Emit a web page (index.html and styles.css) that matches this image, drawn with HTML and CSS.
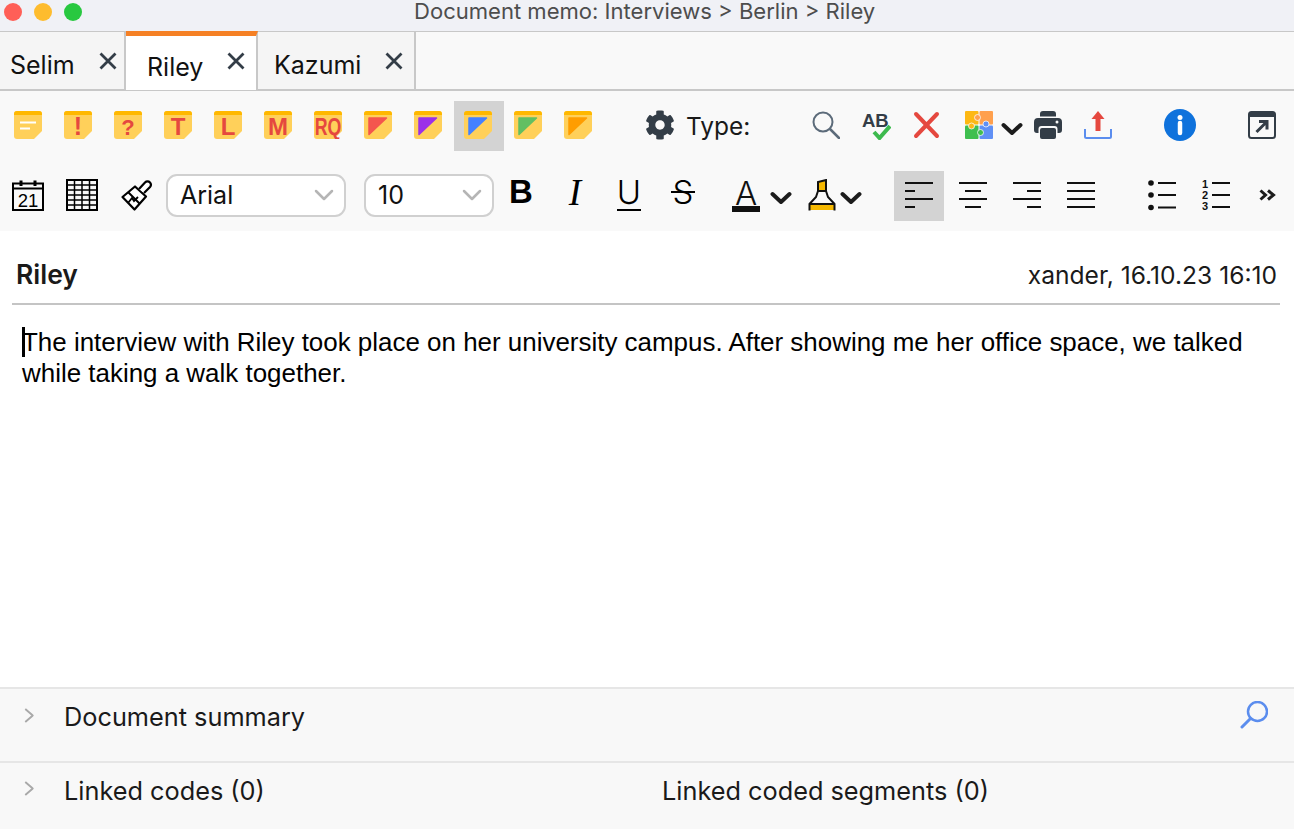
FILE: index.html
```html
<!DOCTYPE html>
<html lang="en">
<head>
<meta charset="utf-8">
<title>Document memo</title>
<link rel="stylesheet" href="styles.css">
</head>
<body>
<svg class="sprite" width="0" height="0">
  <symbol id="note" viewBox="0 0 28 28">
    <path fill="#ffd05a" d="M3 0H25a3 3 0 0 1 3 3V20L20 28H3a3 3 0 0 1-3-3V3a3 3 0 0 1 3-3z"/>
    <path fill="#ffb800" d="M3 0H25a3 3 0 0 1 3 3V4H0V3a3 3 0 0 1 3-3z"/>
  </symbol>
  <symbol id="chev" viewBox="0 0 22 14">
    <path fill="none" stroke="#1c1c1c" stroke-width="4" stroke-linecap="round" stroke-linejoin="round" d="M2.500 3 11 11 19.500 3"/>
  </symbol>
  <symbol id="selchev" viewBox="0 0 20 12">
    <path fill="none" stroke="#b5b5b5" stroke-width="2.500" stroke-linecap="round" stroke-linejoin="round" d="M2 2 10 10 18 2"/>
  </symbol>
  <symbol id="gt" viewBox="0 0 10 16">
    <path fill="none" stroke="#a9a9a9" stroke-width="2" d="M1 1 9 8 1 15"/>
  </symbol>
</svg>

<header class="titlebar">
  <div class="lights"><i class="light red"></i><i class="light amber"></i><i class="light green"></i></div>
  <div class="title">Document memo: Interviews &gt; Berlin &gt; Riley</div>
</header>

<nav class="tabs">
  <div class="tab tab-selim"><span>Selim</span><svg class="close" viewBox="0 0 18 18"><path d="M1.500 1.500 16.500 16.500M16.500 1.500 1.500 16.500"/></svg></div>
  <div class="tab tab-riley active"><span>Riley</span><svg class="close" viewBox="0 0 18 18"><path d="M1.500 1.500 16.500 16.500M16.500 1.500 1.500 16.500"/></svg></div>
  <div class="tab tab-kazumi"><span>Kazumi</span><svg class="close" viewBox="0 0 18 18"><path d="M1.500 1.500 16.500 16.500M16.500 1.500 1.500 16.500"/></svg></div>
</nav>

<section class="toolbar">
  <div class="row row-one">
    <div class="cell"><svg class="ic28 note" viewBox="0 0 28 28"><use href="#note"/><path fill="#fff" d="M6 10.500H22V12.500H6zM6 16.500H16V18.500H6z"/></svg></div>
    <div class="cell"><svg class="ic28 note" viewBox="0 0 28 28"><use href="#note"/><text class="nt nt-bang" x="14" y="24">!</text></svg></div>
    <div class="cell"><svg class="ic28 note" viewBox="0 0 28 28"><use href="#note"/><text class="nt nt-q" x="14" y="24">?</text></svg></div>
    <div class="cell"><svg class="ic28 note" viewBox="0 0 28 28"><use href="#note"/><text class="nt" x="14" y="24">T</text></svg></div>
    <div class="cell"><svg class="ic28 note" viewBox="0 0 28 28"><use href="#note"/><text class="nt" x="14" y="24">L</text></svg></div>
    <div class="cell"><svg class="ic28 note" viewBox="0 0 28 28"><use href="#note"/><text class="nt" x="14" y="24">M</text></svg></div>
    <div class="cell"><svg class="ic28 note" viewBox="0 0 28 28"><use href="#note"/><text class="nt" transform="translate(14 24) scale(.74 1)">RQ</text></svg></div>
    <div class="cell"><svg class="ic28 note" viewBox="0 0 28 28"><use href="#note"/><path class="tri tri-red" d="M5 7H22.500L5 23.500z"/></svg></div>
    <div class="cell"><svg class="ic28 note" viewBox="0 0 28 28"><use href="#note"/><path class="tri tri-purple" d="M5 7H22.500L5 23.500z"/></svg></div>
    <div class="cell selected"><svg class="ic28 note" viewBox="0 0 28 28"><use href="#note"/><path class="tri tri-blue" d="M5 7H22.500L5 23.500z"/></svg></div>
    <div class="cell"><svg class="ic28 note" viewBox="0 0 28 28"><use href="#note"/><path class="tri tri-green" d="M5 7H22.500L5 23.500z"/></svg></div>
    <div class="cell"><svg class="ic28 note" viewBox="0 0 28 28"><use href="#note"/><path class="tri tri-orange" d="M5 7H22.500L5 23.500z"/></svg></div>

    <div class="cell gear-cell"><svg class="gear" viewBox="0 0 512 512"><path fill="#333d47" d="M487.400 315.700l-42.600-24.600c4.300-23.200 4.300-47 0-70.200l42.600-24.600c4.900-2.800 7.100-8.600 5.500-14-11.100-35.600-30-67.800-54.700-94.600-3.800-4.100-10-5.100-14.800-2.300L380.800 110c-17.900-15.400-38.500-27.300-60.800-35.100V25.800c0-5.600-3.900-10.500-9.400-11.700-36.700-8.200-74.300-7.800-109.200 0-5.500 1.200-9.400 6.100-9.400 11.700V75c-22.200 7.900-42.800 19.800-60.800 35.100L88.700 85.500c-4.900-2.800-11-1.900-14.800 2.300-24.700 26.700-43.600 58.900-54.700 94.600-1.700 5.400.6 11.200 5.500 14L67.300 221c-4.300 23.200-4.300 47 0 70.200l-42.600 24.600c-4.900 2.800-7.100 8.600-5.500 14 11.100 35.600 30 67.800 54.700 94.600 3.800 4.100 10 5.100 14.800 2.300l42.600-24.600c17.900 15.400 38.500 27.300 60.800 35.100v49.200c0 5.600 3.900 10.500 9.400 11.700 36.700 8.200 74.300 7.800 109.200 0 5.500-1.200 9.400-6.100 9.400-11.700v-49.200c22.200-7.900 42.800-19.800 60.800-35.100l42.600 24.600c4.900 2.800 11 1.900 14.800-2.300 24.700-26.700 43.600-58.900 54.700-94.600 1.500-5.500-.7-11.300-5.600-14.100zM256 336c-44.100 0-80-35.900-80-80s35.900-80 80-80 80 35.900 80 80-35.900 80-80 80z"/></svg></div>
    <div class="type-label">Type:</div>

    <div class="cell"><svg class="ic28" viewBox="0 0 28 28"><circle cx="11" cy="11" r="9.500" fill="none" stroke="#5c6b7a" stroke-width="2"/><path d="M18 18 27 27" stroke="#5c6b7a" stroke-width="2.500" stroke-linecap="round"/></svg></div>
    <div class="cell"><svg class="ic30" viewBox="0 0 30 30"><text class="ab" x="1" y="17">AB</text><path d="M13 22 18.500 28 29 16" fill="none" stroke="#3dba4e" stroke-width="4"/></svg></div>
    <div class="cell"><svg class="ic28" viewBox="0 0 28 28"><path d="M4 3 25 25M25 3 4 25" stroke="#e5483f" stroke-width="4" stroke-linecap="round"/></svg></div>
    <div class="cell puzzle-cell"><svg class="ic28" viewBox="0 0 28 28">
      <rect width="13.500" height="13.500" rx="1" fill="#fdb813"/>
      <rect x="14.500" width="13.500" height="13.500" rx="1" fill="#ffa04d"/>
      <rect y="14.500" width="13.500" height="13.500" rx="1" fill="#3fbf4f"/>
      <rect x="14.500" y="14.500" width="13.500" height="13.500" rx="1" fill="#6090f5"/>
      <circle class="knob" cx="6.500" cy="15" r="3" fill="#fdb813"/>
      <circle class="knob" cx="12.500" cy="6.500" r="3" fill="#ffa04d"/>
      <circle class="knob" cx="21" cy="13" r="3" fill="#6090f5"/>
      <circle class="knob" cx="15.500" cy="21.500" r="3" fill="#3fbf4f"/>
    </svg><svg class="chev" viewBox="0 0 22 14"><use href="#chev"/></svg></div>
    <div class="cell"><svg class="ic28" viewBox="0 0 28 28"><path fill="#333d47" d="M6 5.500V3a3 3 0 0 1 3-3H19a3 3 0 0 1 3 3V5.500zM4 7H24a4 4 0 0 1 4 4V19a3 3 0 0 1-3 3H23.500V18a3 3 0 0 0-3-3H7.500a3 3 0 0 0-3 3V22H3a3 3 0 0 1-3-3V11a4 4 0 0 1 4-4z"/><path fill="#333d47" d="M8 17H20a2 2 0 0 1 2 2V26a2 2 0 0 1-2 2H8a2 2 0 0 1-2-2V19a2 2 0 0 1 2-2z"/><circle cx="23" cy="11" r="1.500" fill="#f9f9f9"/></svg></div>
    <div class="cell"><svg class="ic28" viewBox="0 0 28 28"><path d="M1 18V25.500a1.500 1.500 0 0 0 1.500 1.500H25.500a1.500 1.500 0 0 0 1.500-1.500V18" fill="none" stroke="#5b8dee" stroke-width="2"/><path fill="#e5483f" d="M14 0 20.500 8H16.500V20H11.500V8H7.500z"/></svg></div>
    <div class="cell info-cell"><svg class="ic32" viewBox="0 0 32 32"><circle cx="16" cy="16" r="16" fill="#0f72dc"/><circle cx="16" cy="8.500" r="2.500" fill="#fff"/><path d="M16 14V24" stroke="#fff" stroke-width="4.500" stroke-linecap="round"/></svg></div>
    <div class="cell popout-cell"><svg class="ic28" viewBox="0 0 28 28"><rect x="1" y="1" width="26" height="26" rx="2.500" fill="none" stroke="#333d47" stroke-width="2"/><path fill="#333d47" d="M1 3a2 2 0 0 1 2-2H25a2 2 0 0 1 2 2V6H1z"/><path d="M8.500 21 19 10.500M11 10.500H19V18.500" fill="none" stroke="#333d47" stroke-width="3"/></svg></div>
  </div>

  <div class="row row-two">
    <div class="cell"><svg class="ic32" viewBox="0 0 32 32"><path d="M1 4.500H31V31H1z" fill="none" stroke="#000" stroke-width="2"/><path d="M1 9.500H31" stroke="#000" stroke-width="2"/><path d="M9 1.500V7M23 1.500V7" stroke="#000" stroke-width="3"/><text class="cal" x="16" y="28">21</text></svg></div>
    <div class="cell table-cell"><svg class="ic32" viewBox="0 0 32 32"><path d="M1 1H31V31H1z" fill="none" stroke="#000" stroke-width="2"/><path d="M1 6H31M1 11H31M1 16H31M1 21H31M1 26H31M8.500 1V31M16 1V31M23.500 1V31" stroke="#000" stroke-width="1.500"/></svg></div>
    <div class="cell brush-cell"><svg class="ic32" viewBox="0 0 32 32"><path d="M14 7.500 1.500 18 13.500 30.500 25 17.500z" fill="#fff" stroke="#000" stroke-width="2.200" stroke-linejoin="round"/><path d="M7 13 19 25" stroke="#000" stroke-width="2"/><path d="M7 24 11 19 13 22 17 18" fill="none" stroke="#000" stroke-width="1.800"/><path d="M18 10 24 3.500a3.500 3.500 0 0 1 5 0 3.500 3.500 0 0 1 0 4.500L23 14" fill="#fff" stroke="#000" stroke-width="2.200"/></svg></div>
    <div class="select select-font"><span>Arial</span><svg class="selchev" viewBox="0 0 20 12"><use href="#selchev"/></svg></div>
    <div class="select select-size"><span>10</span><svg class="selchev" viewBox="0 0 20 12"><use href="#selchev"/></svg></div>
    <div class="fmt fmt-b">B</div>
    <div class="fmt fmt-i">I</div>
    <div class="fmt fmt-u">U</div>
    <div class="fmt fmt-s">S</div>
    <div class="color-btn">
      <div class="fmt-a">A</div>
      <svg class="chev" viewBox="0 0 22 14"><use href="#chev"/></svg>
    </div>
    <div class="hl-btn">
      <svg class="hl" viewBox="0 0 28 32"><path fill="#f5b800" d="M10 12V3L18 1V12z"/><path fill="#f5b800" d="M1.500 25H26.500V31H1.500z"/><path d="M10 12V3L18 1V12M10 12 8 18 1.500 25V31.500M18 12 20 18 26.500 25V31.500M1.500 25H26.500M10 12H18" fill="none" stroke="#111" stroke-width="2"/></svg>
      <svg class="chev" viewBox="0 0 22 14"><use href="#chev"/></svg>
    </div>
    <div class="cell align selected"><svg class="al" viewBox="0 0 28 26"><path d="M0 1H28M0 9H10M0 17H28M0 25H10"/></svg></div>
    <div class="cell align"><svg class="al" viewBox="0 0 28 26"><path d="M0 1H28M6 9H22M0 17H28M6 25H22"/></svg></div>
    <div class="cell align"><svg class="al" viewBox="0 0 28 26"><path d="M0 1H28M14 9H28M0 17H28M14 25H28"/></svg></div>
    <div class="cell align"><svg class="al" viewBox="0 0 28 26"><path d="M0 1H28M0 9H28M0 17H28M0 25H28"/></svg></div>
    <div class="cell list-cell"><svg class="lst" viewBox="0 0 28 32"><circle cx="3" cy="4" r="2.800"/><circle cx="3" cy="16" r="2.800"/><circle cx="3" cy="28.500" r="2.800"/><path d="M10 4H28M10 16H28M10 28.500H28"/></svg></div>
    <div class="cell num-cell"><svg class="lst" viewBox="0 0 28 32"><text class="num" x="0" y="9">1</text><text class="num" x="0" y="20">2</text><text class="num" x="0" y="31">3</text><path d="M10 4H28M10 16H28M10 28H28"/></svg></div>
    <div class="more"><svg class="more-ic" viewBox="0 0 17 12"><path d="M1.500 1.500 6.500 6 1.500 10.500M9 1.500 14.500 6 9 10.500" fill="none" stroke="#1c1c1c" stroke-width="3"/></svg></div>
  </div>
</section>

<main class="doc">
  <div class="doc-head">
    <strong class="doc-name">Riley</strong>
    <span class="doc-meta">xander, 16.10.23 16:10</span>
  </div>
  <div class="doc-body"><i class="caret"></i>The interview with Riley took place on her university campus. After showing me her office space, we talked while taking a walk together.</div>
</main>

<section class="panel panel-summary">
  <svg class="gt" viewBox="0 0 10 16"><use href="#gt"/></svg>
  <span class="panel-label">Document summary</span>
  <svg class="panel-search" viewBox="0 0 28 28"><circle cx="17.500" cy="10.500" r="9.500" fill="none" stroke="#5b8dee" stroke-width="2.500"/><path d="M10.500 17.500 2 26" stroke="#5b8dee" stroke-width="3" stroke-linecap="round"/></svg>
</section>
<section class="panel panel-links">
  <svg class="gt" viewBox="0 0 10 16"><use href="#gt"/></svg>
  <span class="panel-label panel-codes">Linked codes (0)</span>
  <span class="panel-label panel-segs">Linked coded segments (0)</span>
</section>
</body>
</html>
```
FILE: styles.css
```css
* { box-sizing: border-box; }
html, body { margin: 0; padding: 0; }
body {
  width: 1294px;
  height: 829px;
  overflow: hidden;
  display: flex;
  flex-direction: column;
  font-family: Inter, "Noto Sans", sans-serif;
  color: #111;
  background: #fff;
}
.sprite { position: absolute; }

.titlebar {
  height: 32px;
  flex: none;
  background: #f0f1f6;
  border-bottom: 1px solid #c8c8c8;
  display: flex;
  align-items: center;
}
.lights { display: flex; gap: 12px; margin-left: 4px; margin-top: -7px; }
.light { width: 18px; height: 18px; border-radius: 50%; display: block; }
.red { background: #ff5f57; }
.amber { background: #febc2e; }
.green { background: #28c840; }
.title {
  margin-left: 332px;
  font-size: 22.050px;
  color: #4d4d4d;
  margin-top: -10px;
  white-space: nowrap;
}

.tabs {
  height: 59px;
  flex: none;
  display: flex;
  background: #f9f9f9;
  border-bottom: 2px solid #c8c8c8;
  font-size: 25px;
}
.tab {
  position: relative;
  height: 57px;
  display: flex;
  background: #f5f5f5;
  border-right: 2px solid #c8c8c8;
  padding-top: 15px;
  line-height: 36px;
}
.tab-selim { width: 126px; padding-left: 10px; }
.tab-riley { width: 132px; padding-left: 21px; }
.tab-kazumi { width: 158px; padding-left: 16px; }
.tab.active {
  background: #fff;
  height: 59px;
  margin-top: -1px;
  border-top: 5px solid #f58025;
  padding-top: 13px;
  margin-bottom: -2px;
}
.close {
  position: absolute;
  top: 20px;
  right: 7px;
  width: 18px;
  height: 18px;
  stroke: #333d47;
  stroke-width: 2.800;
  fill: none;
}
.tab.active .close { top: 16px; right: 11px; }
.tab-kazumi .close { right: 11px; }

.toolbar {
  height: 140px;
  flex: none;
  background: #f9f9f9;
  padding-top: 10px;
}
.row { display: flex; align-items: center; height: 50px; }
.row-one { padding-left: 4px; }
.row-two { margin-top: 20px; padding-left: 3px; }
.cell {
  width: 50px;
  height: 50px;
  flex: none;
  display: flex;
  align-items: center;
  justify-content: center;
}
.cell svg { margin-bottom: 2px; }
.cell svg.chev { margin-bottom: 0; margin-top: 5px; }
.selected { background: #d3d3d3; }
.ic28 { width: 28px; height: 28px; flex: none; }
.ic30 { width: 30px; height: 30px; flex: none; }
.ic32 { width: 32px; height: 32px; flex: none; }
.note { margin-right: 2px; }
.nt { font: bold 24px "Liberation Sans", sans-serif; fill: #e5483f; text-anchor: middle; }
.nt-bang { font-size: 25px; }
.nt-q { font-size: 22px; }
.tri { stroke-width: 1.500; stroke-linejoin: round; }
.tri-red { fill: #f4564e; stroke: #f4564e; }
.tri-purple { fill: #9b30e8; stroke: #9b30e8; }
.tri-blue { fill: #4480ff; stroke: #4480ff; }
.tri-green { fill: #62bf62; stroke: #62bf62; }
.tri-orange { fill: #ff9d00; stroke: #ff9d00; }
.gear-cell { margin-left: 31px; }
.gear { width: 30px; height: 30px; }
.type-label { width: 115px; flex: none; font-size: 24.500px; margin-left: 1px; color: #1a1a1a; }
.ab { font: bold 18.500px "Liberation Sans", sans-serif; fill: #333d47; }
.puzzle-cell { width: 58px; margin-left: 14px; justify-content: flex-start; gap: 8px; }
.knob { stroke: #f9f9f9; stroke-width: 0.800; }
.chev { width: 22px; height: 14px; flex: none; }
.info-cell { margin-left: 32px; }
.popout-cell { margin-left: 32px; }

.cal { font: 18.500px "Liberation Sans", sans-serif; text-anchor: middle; fill: #000; }
.table-cell { margin-left: 4px; }
.brush-cell { margin-left: 5px; }
.select {
  height: 43px;
  margin-bottom: 2px;
  background: #fff;
  border: 2px solid #d0d0d0;
  border-radius: 11px;
  display: flex;
  align-items: center;
  justify-content: space-between;
  padding: 0 10px 0 12px;
  font-size: 25px;
  color: #111;
  flex: none;
}
.select-font { width: 180px; margin-left: 4px; }
.select-size { width: 130px; margin-left: 18px; }
.selchev { width: 20px; height: 12px; }
.fmt {
  width: 54px;
  height: 50px;
  flex: none;
  text-align: center;
  color: #000;
  position: relative;
}
.fmt-b { font: bold 33px/42px "Liberation Sans", sans-serif; }
.fmt-i { font: italic 37px/44px "Liberation Serif", serif; }
.fmt-u { font: 300 33px/42px Inter, sans-serif; }
.fmt-u::after {
  content: "";
  position: absolute;
  left: 15px;
  right: 15px;
  top: 38px;
  height: 2px;
  background: #000;
}
.fmt-s { font: 300 33px/42px Inter, sans-serif; }
.fmt-s::after {
  content: "";
  position: absolute;
  left: 15px;
  right: 15px;
  top: 20px;
  height: 2px;
  background: #000;
}
.color-btn { width: 98px; display: flex; align-items: center; flex: none; padding-left: 22px; gap: 10px; }
.color-btn .chev, .hl-btn .chev { margin-top: 3px; }
.fmt-a {
  width: 28px;
  height: 32px;
  flex: none;
  font: 300 33px/27px Inter, sans-serif;
  text-align: center;
  border-bottom: 6px solid #111;
}
.hl-btn { width: 74px; display: flex; align-items: center; flex: none; gap: 4px; }
.hl { width: 28px; height: 32px; flex: none; margin-bottom: 2px; }
.align { margin: 0 2px; }
.hl-btn + .align { margin-left: 12px; }
.al { width: 28px; height: 26px; stroke: #111; stroke-width: 2; fill: none; }
.list-cell { margin-left: 27px; width: 54px; }
.num-cell { width: 54px; }
.lst { width: 28px; height: 32px; flex: none; }
.lst circle { fill: #111; }
.lst path { stroke: #111; stroke-width: 2; fill: none; }
.num { font: bold 11px "Liberation Sans", sans-serif; fill: #111; }
.more { width: 50px; display: flex; justify-content: center; margin-left: -1px; margin-bottom: 2px; }
.more-ic { width: 17px; height: 12px; }

.doc { flex: 1; min-height: 0; background: #fff; padding: 26px 14px 0 12px; }
.doc-head {
  display: flex;
  justify-content: space-between;
  align-items: center;
  height: 48px;
  padding: 0 3px 10px 4px;
  border-bottom: 2px solid #c4c4c4;
}
.doc-name { font-weight: 600; font-size: 26.500px; color: #1a1a1a; margin-top: -2px; }
.doc-meta { font-size: 24.600px; color: #1a1a1a; }
.doc-body {
  position: relative;
  margin: 22px 0 0 10px;
  font: 25.950px/31px "Liberation Sans", sans-serif;
  color: #000;
}
.caret {
  position: absolute;
  left: 0;
  top: 0;
  width: 3px;
  height: 30px;
  background: #000;
}

.panel { flex: none; background: #f8f8f8; display: flex; position: relative; font-size: 25.300px; color: #1a1a1a; }
.panel-summary { height: 74px; border-top: 2px solid #e6e6e6; padding-top: 12px; }
.panel-links { height: 68px; border-top: 2px solid #e6e6e6; padding-top: 12px; }
.gt { position: absolute; left: 24px; top: 19px; width: 10px; height: 15px; }
.panel-links .gt { top: 18px; }
.panel-label { margin-left: 64px; line-height: 32px; white-space: nowrap; }
.panel-codes { width: 534px; flex: none; }
.panel-segs { margin-left: 64px; }
.panel-search { position: absolute; left: 1240px; top: 12px; width: 28px; height: 28px; }
```
